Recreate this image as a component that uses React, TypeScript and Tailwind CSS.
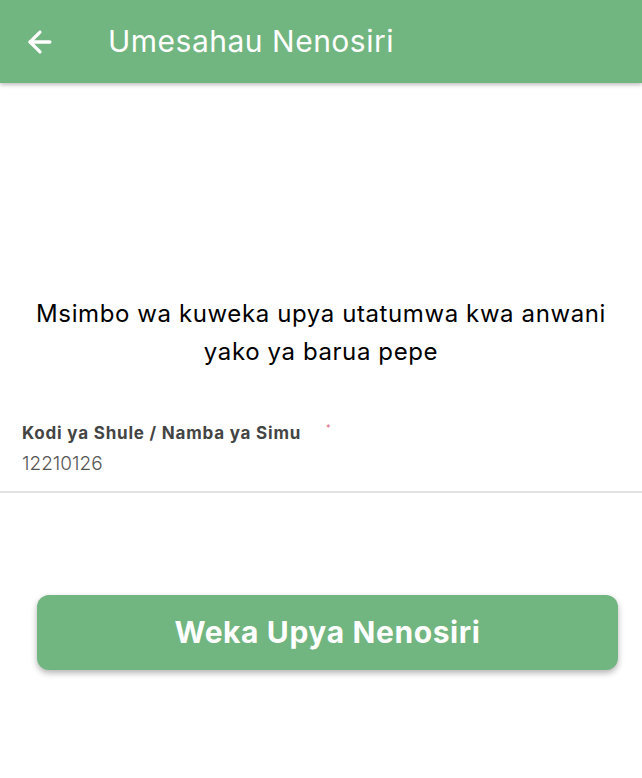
import React from 'react';
import { ArrowLeft } from 'lucide-react';

export default function App() {
  return (
    <div className="w-[642px] h-[778px] bg-white flex flex-col font-['Inter','Noto_Sans',sans-serif]">
      <header className="h-[83px] bg-[#71b580] flex items-center shrink-0 shadow-[0_2px_4px_rgba(0,0,0,0.25)] z-10">
        <ArrowLeft className="w-[34px] h-[34px] text-white ml-[23px]" strokeWidth={2.3} />
        <h1 className="ml-[51px] text-[30px] text-white font-normal tracking-[0.5px]">Umesahau Nenosiri</h1>
      </header>

      <main className="flex flex-col flex-1">
        <p className="mt-[212px] px-[20px] text-center text-[24px] leading-[38px] text-black tracking-[0.6px]">
          Msimbo wa kuweka upya utatumwa kwa anwani yako ya barua pepe
        </p>

        <div className="mt-[50px] border-b-2 border-[#e2e2e2] pb-[14px]">
          <div className="flex items-start pl-[22px]">
            <span className="text-[17px] font-bold text-[#444] leading-[24px] tracking-[0.8px]">Kodi ya Shule / Namba ya Simu</span>
            <span className="ml-[25px] text-[9px] text-[#d9607a] leading-[14px]">*</span>
          </div>
          <div className="pl-[22px] mt-[6px] text-[19px] text-[#555] font-light leading-[26px]">12210126</div>
        </div>

        <div className="pl-[37px] pr-[24px] mt-[102px]">
          <button className="w-full h-[75px] rounded-[12px] bg-[#71b580] text-white text-[30px] font-bold tracking-[0.6px] shadow-[0_3px_6px_rgba(0,0,0,0.3)]">
            Weka Upya Nenosiri
          </button>
        </div>
      </main>
    </div>
  );
}
